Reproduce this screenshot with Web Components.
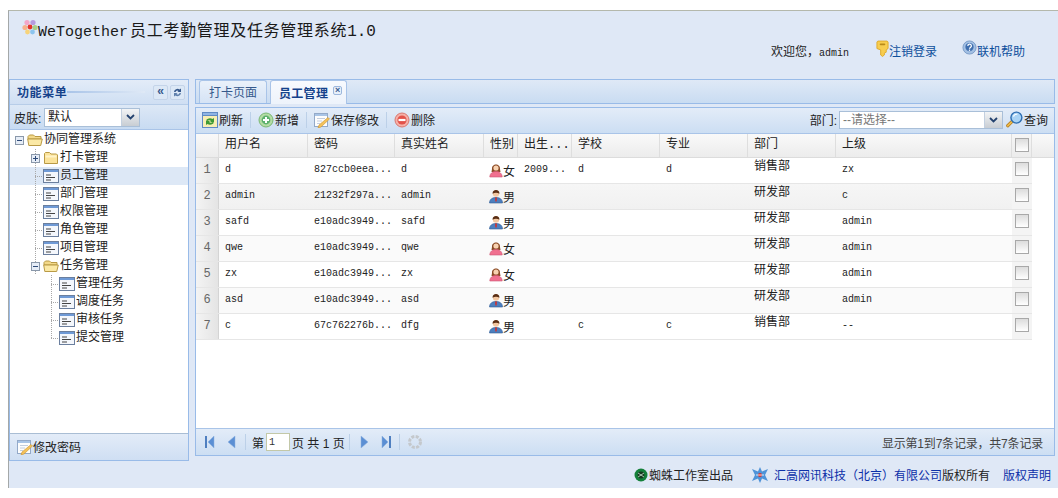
<!DOCTYPE html>
<html lang="zh">
<head>
<meta charset="utf-8">
<title>WeTogether</title>
<style>
  html, body { margin: 0; padding: 0; background: #fff; }
  body { font: 12px "Liberation Mono", "Noto Sans CJK SC", monospace; color: #222; overflow: hidden; }
</style>
</head>
<body>
<wt-app></wt-app>
<script>
// every icon is a small inline svg, wt-icon picks one by name
const ICONS = {
  flower: `<svg viewBox="0 0 16 16"><circle cx="5" cy="3.5" r="2.6" fill="#f3a6c8"/><circle cx="11" cy="3.5" r="2.6" fill="#b59be0"/><circle cx="3" cy="8.5" r="2.6" fill="#f7b08c"/><circle cx="13" cy="8.5" r="2.6" fill="#a8d08c"/><circle cx="5.5" cy="13" r="2.4" fill="#f7d37a"/><circle cx="10.5" cy="13" r="2.4" fill="#8cc4ee"/><circle cx="8" cy="8" r="2.4" fill="#e3342a"/></svg>`,
  key: `<svg viewBox="0 0 14 18"><path d="M2 1h10l1 1v7l-2 1.5V13l-2 1v2l-2 1.5L5 16v-5.5L1 9V2z" fill="#f7cd4f" stroke="#dfa92a"/><rect x="4" y="3.5" width="6" height="2" rx="1" fill="#b98a1a"/></svg>`,
  help: `<svg viewBox="0 0 16 16"><circle cx="8" cy="8" r="7" fill="#a3c0e4" stroke="#7b9cc8"/><circle cx="8" cy="7.5" r="4.4" fill="#3f6eae"/><path d="M6.2 6.3a1.9 1.9 0 1 1 2.8 1.6c-.7.4-1 .7-1 1.4" fill="none" stroke="#fff" stroke-width="1.3"/><rect x="7.3" y="10.2" width="1.4" height="1.4" fill="#fff"/></svg>`,
  folderOpen: `<svg viewBox="0 0 16 16"><path d="M1 4.5 2.5 3h4L8 4.5h6V7H1z" fill="#f3d98a" stroke="#b99a45"/><path d="M.7 7h14.6l-1.6 6.5H1.8z" fill="#fbe9a6" stroke="#b99a45"/></svg>`,
  folder: `<svg viewBox="0 0 16 16"><path d="M1.500 13.500V3.500l1-1h4l1.500 1.500h5.500l1 1v8.500z" fill="#fbe39a" stroke="#b99a45"/><path d="M2.500 5.500h11v2h-11z" fill="#fff3c8"/></svg>`,
  leaf: `<svg viewBox="0 0 16 16"><rect x=".5" y="1.500" width="15" height="13" fill="#f4f7fc" stroke="#6b7f9e"/><rect x="1" y="2" width="14" height="2" fill="#6f9ad6"/><path d="M3 7h5M3 9.500h9M3 12h5" stroke="#444"/></svg>`,
  plus: `<svg viewBox="0 0 9 9"><rect x=".5" y=".5" width="8" height="8" fill="#e6edf7" stroke="#8a98aa"/><path d="M2 4.500h5M4.500 2v5" stroke="#2f4b78"/></svg>`,
  minus: `<svg viewBox="0 0 9 9"><rect x=".5" y=".5" width="8" height="8" fill="#e6edf7" stroke="#8a98aa"/><path d="M2 4.500h5" stroke="#2f4b78"/></svg>`,
  female: `<svg viewBox="0 0 14 16"><path d="M3 7C2.500 1 11.500 1 11 7l.5 3h-9z" fill="#8a4a25"/><path d="M.8 15c0-3.500 2.700-5.500 6.200-5.500s6.200 2 6.200 5.500z" fill="#f0708f" stroke="#cf5575" stroke-width=".6"/><circle cx="7" cy="6" r="2.600" fill="#f8d2b0"/></svg>`,
  male: `<svg viewBox="0 0 14 16"><path d="M.5 15c0-3.500 2.500-5.500 6.500-5.500s6.500 2 6.500 5.500z" fill="#4c7fbe" stroke="#2f5c95" stroke-width=".6"/><path d="M6 9.500h2l-.3 4h-1.400z" fill="#c33"/><circle cx="7" cy="5.500" r="3.200" fill="#f3c8a2"/><path d="M3.600 5.800C3 .8 11 .8 10.400 5.800 8.500 4.300 5.500 4.300 3.600 5.800z" fill="#5a2e14"/></svg>`,
  refresh: `<svg viewBox="0 0 16 16"><rect x=".5" y="2.500" width="15" height="13" fill="#f8eeb4" stroke="#5f8ac4"/><rect x=".5" y=".5" width="15" height="3" fill="#8fb4e4" stroke="#5f8ac4"/><path d="M4 8.500a4 3 0 0 1 6.500-1.500l1.500-1v4H8l1-1a2.500 2 0 0 0-3.500 0z" fill="#3f9a35"/><path d="M12 10.500a4 3 0 0 1-6.500 1.500L4 13V9h4l-1 1a2.500 2 0 0 0 3.500 0z" fill="#3f9a35"/></svg>`,
  add: `<svg viewBox="0 0 16 16"><circle cx="8" cy="8" r="7" fill="#b4dca4" stroke="#7ab874"/><circle cx="8" cy="8" r="4.400" fill="#5cb06c"/><path d="M8 5v6M5 8h6" stroke="#fff" stroke-width="2"/></svg>`,
  edit: `<svg viewBox="0 0 16 16"><rect x=".5" y="1.500" width="13" height="13" fill="#fdfdfd" stroke="#93a9c8"/><rect x="1" y="2" width="12" height="2" fill="#a8c4e6"/><path d="M3 6.500h8M3 9h5M3 11.500h3" stroke="#c4cede"/><path d="M14 5.500l1.500 1.500L7 15l-3 1 1-3z" fill="#f4c25a" stroke="#c99434" stroke-width=".6"/></svg>`,
  del: `<svg viewBox="0 0 16 16"><circle cx="8" cy="8" r="7" fill="#f6b0a8" stroke="#d87870"/><circle cx="8" cy="8" r="4.600" fill="#e2524a"/><path d="M4.500 8h7" stroke="#fff" stroke-width="2.200"/></svg>`,
  search: `<svg viewBox="0 0 18 18"><path d="M7 10.500 1.800 15.600" stroke="#b9822a" stroke-width="3.400" stroke-linecap="round"/><path d="M7 10.500 1.800 15.600" stroke="#f2c14a" stroke-width="1.600" stroke-linecap="round"/><circle cx="11" cy="7" r="5.800" fill="#a9d3f5" stroke="#2f6fb3" stroke-width="1.500"/><path d="M8 6a3.500 3 0 0 1 4-2.500" stroke="#fff" stroke-width="1.200" fill="none"/></svg>`,
  first: `<svg viewBox="0 0 11 14"><path d="M1 1h2v12H1z" fill="#4f7fc0"/><path d="M10 1v12L4 7z" fill="#5b8fd4" stroke="#8fb0dc" stroke-width=".5"/></svg>`,
  prev: `<svg viewBox="0 0 9 14"><path d="M8 1v12L1 7z" fill="#5b8fd4" stroke="#8fb0dc" stroke-width=".5"/></svg>`,
  next: `<svg viewBox="0 0 9 14"><path d="M1 1v12l7-6z" fill="#5b8fd4" stroke="#8fb0dc" stroke-width=".5"/></svg>`,
  last: `<svg viewBox="0 0 11 14"><path d="M8 1h2v12H8z" fill="#4f7fc0"/><path d="M1 1v12l6-6z" fill="#5b8fd4" stroke="#8fb0dc" stroke-width=".5"/></svg>`,
  loading: `<svg viewBox="0 0 16 16"><circle cx="8" cy="8" r="5.500" fill="none" stroke="#c4c8cc" stroke-width="3" stroke-dasharray="3 1.320"/></svg>`,
  spider: `<svg viewBox="0 0 14 14"><circle cx="7" cy="7" r="6.500" fill="#14803a"/><circle cx="7" cy="7" r="3.400" fill="#15391f"/><path d="M4 5l6 4M10 5l-6 4" stroke="#cfe8d4" stroke-width=".8"/></svg>`,
  star: `<svg viewBox="0 0 18 16"><path d="M1 2l6 2.500L9 0l2 4.500L17 2l-3 6 3 6-6-2.500L9 16l-2-4.500L1 14l3-6z" fill="#4f93d8"/><circle cx="9" cy="8" r="2" fill="#d9322c"/><path d="M5 8h8" stroke="#fff" stroke-width=".8"/></svg>`,
  sync: `<svg viewBox="0 0 9 9"><path d="M1 4a3.500 3.500 0 0 1 5.500-2.500L8 .5V4H4.500l1-1A2 2 0 0 0 2.500 4z" fill="#36598c"/><path d="M8 5a3.500 3.500 0 0 1-5.500 2.500L1 8.500V5h3.500l-1 1a2 2 0 0 0 3 -1z" fill="#5f80ac"/></svg>`,
};

class WtIcon extends HTMLElement {
  connectedCallback() {
    const w = this.getAttribute("w") || 16;
    const h = this.getAttribute("h") || 16;
    const shadow = this.attachShadow({ mode: "open" });
    shadow.innerHTML = `<style>
      :host { display: inline-flex; flex: none; width: ${w}px; height: ${h}px; }
      svg { width: 100%; height: 100%; display: block; }
    </style>${ICONS[this.getAttribute("name")]}`;
  }
}

// small combobox, used in the skin row and in the toolbar
class WtCombo extends HTMLElement {
  connectedCallback() {
    const shadow = this.attachShadow({ mode: "open" });
    shadow.innerHTML = `<style>
      :host { display: flex; flex: none; box-sizing: border-box; border: 1px solid #a9bfd8; background: #fff; color: var(--combo-color, #222); font-family: "Liberation Sans", "Noto Sans CJK SC", sans-serif; }
      .txt { flex: 1; padding-left: 3px; overflow: hidden; white-space: nowrap; line-height: 16px; }
      .btn { flex: none; width: 17px; display: flex; align-items: center; justify-content: center; background: linear-gradient(#f2f4f6, #c8cdd3); border-left: 1px solid #c3d0e0; }
      svg { width: 9px; height: 6px; }
    </style><div class="txt"><slot></slot></div>
    <div class="btn"><svg viewBox="0 0 9 6"><path d="M1 1l3.500 3.500L8 1" fill="none" stroke="#24426f" stroke-width="1.800"/></svg></div>`;
  }
}

class WtHeader extends HTMLElement {
  connectedCallback() {
    const shadow = this.attachShadow({ mode: "open" });
    shadow.innerHTML = `<style>
      :host { display: flex; flex-direction: column; flex: none; height: 68px; box-sizing: border-box; padding: 8px 33px 0 13px; }
      .title { display: flex; align-items: flex-start; font-size: 15px; line-height: 22px; color: #1a1a1a; height: 22px; }
      .title span { margin-top: 2px; white-space: nowrap; }
      .title b { font-weight: 400; font-size: 16px; letter-spacing: .7px; margin-left: 2px; }
      .title i { font-style: normal; font-size: 16px; }
      .bar { display: flex; justify-content: flex-end; align-items: flex-start; margin-top: -1px; }
      .hello { margin: 5px 27px 0 0; font-size: 10px; line-height: 16px; }
      .hello i { font-style: normal; font-size: 12px; }
      a { display: flex; align-items: flex-start; color: #0e4f9c; line-height: 18px; }
      a span { margin-top: 4px; }
      a + a { margin-left: 25px; }
    </style>
    <div class="title"><wt-icon name="flower"></wt-icon><span>WeTogether<b>员工考勤管理及任务管理系统</b><i>1.0</i></span></div>
    <div class="bar">
      <div class="hello"><i>欢迎您，</i>admin</div>
      <a><wt-icon name="key" w="13" h="17"></wt-icon><span>注销登录</span></a>
      <a><wt-icon name="help" w="15" h="15"></wt-icon><span>联机帮助</span></a>
    </div>`;
  }
}

class WtTreeRow extends HTMLElement {
  connectedCallback() {
    const cells = (this.getAttribute("cells") || "").split(" ").filter(Boolean);
    const shadow = this.attachShadow({ mode: "open" });
    shadow.innerHTML = `<style>
      :host { display: flex; align-items: center; height: 18px; padding-left: 1px; white-space: nowrap; }
      :host([selected]) { background: #dde8f6; }
      .c { flex: none; width: 16px; height: 18px; display: flex; align-items: center; justify-content: center; }
      .v, .t, .l { background-repeat: no-repeat; }
      .v { background-image: repeating-linear-gradient(#a8a8a8 0 1px, transparent 1px 2px); background-size: 1px 100%; background-position: 8px 0; }
      .t { background-image: repeating-linear-gradient(#a8a8a8 0 1px, transparent 1px 2px), repeating-linear-gradient(to right, #a8a8a8 0 1px, transparent 1px 2px); background-size: 1px 100%, 8px 1px; background-position: 8px 0, 8px 9px; }
      .l { background-image: repeating-linear-gradient(#a8a8a8 0 1px, transparent 1px 2px), repeating-linear-gradient(to right, #a8a8a8 0 1px, transparent 1px 2px); background-size: 1px 10px, 8px 1px; background-position: 8px 0, 8px 9px; }
      .label { margin-left: 1px; line-height: 18px; }
    </style>
    ${cells.map(c => {
      if (c === "plus" || c === "minus") return `<span class="c v"><wt-icon name="${c}" w="9" h="9"></wt-icon></span>`;
      return `<span class="c ${c === "_" ? "" : c}"></span>`;
    }).join("")}
    <wt-icon name="${this.getAttribute("icon")}"></wt-icon>
    <span class="label"><slot></slot></span>`;
    if (this.hasAttribute("root")) shadow.querySelector(".c").classList.remove("v");
  }
}

class WtWest extends HTMLElement {
  connectedCallback() {
    const shadow = this.attachShadow({ mode: "open" });
    shadow.innerHTML = `<style>
      :host { display: flex; flex-direction: column; flex: none; width: 180px; box-sizing: border-box; border: 1px solid #99bbe8; background: #fff; }
      .head { flex: none; height: 25px; box-sizing: border-box; display: flex; align-items: center; padding: 0 3px 0 7px; background: linear-gradient(#e3ecf8, #cfdff3); border-bottom: 1px solid #b7cde8; }
      .head b { color: #15428b; font-size: 12px; letter-spacing: .6px; }
      .rule { flex: 1; height: 2px; margin: 0 6px 0 0; background: linear-gradient(to right, #a9c4e8, #dfe9f6); }
      .tool { flex: none; width: 15px; height: 15px; margin-left: 2px; box-sizing: border-box; border: 1px solid #c4d4e9; border-radius: 2px; background: #dce8f6; color: #36598c; display: flex; align-items: center; justify-content: center; font-size: 12px; font-weight: 700; line-height: 1; }
      .tool svg { width: 9px; height: 9px; }
      .skin { flex: none; height: 25px; box-sizing: border-box; display: flex; align-items: center; padding-left: 4px; background: linear-gradient(#dde8f6, #c8dbf2); border-bottom: 1px solid #a9c4e8; white-space: nowrap; }
      .skin span { width: 30px; flex: none; font-family: "Liberation Sans", "Noto Sans CJK SC", sans-serif; }
      wt-combo { width: 96px; height: 19px; }
      .tree { flex: 1; padding-top: 1px; }
      .foot { flex: none; height: 27px; box-sizing: border-box; display: flex; align-items: center; padding-left: 7px; background: linear-gradient(#e3ecf8, #cfdff3); border-top: 1px solid #a9bdd4; }
    </style>
    <div class="head"><b>功能菜单</b><div class="rule"></div><div class="tool">«</div><div class="tool">${ICONS.sync}</div></div>
    <div class="skin"><span>皮肤:</span><wt-combo>默认</wt-combo></div>
    <div class="tree">
      <wt-tree-row root cells="minus" icon="folderOpen">协同管理系统</wt-tree-row>
      <wt-tree-row cells="_ plus" icon="folder">打卡管理</wt-tree-row>
      <wt-tree-row selected cells="_ t" icon="leaf">员工管理</wt-tree-row>
      <wt-tree-row cells="_ t" icon="leaf">部门管理</wt-tree-row>
      <wt-tree-row cells="_ t" icon="leaf">权限管理</wt-tree-row>
      <wt-tree-row cells="_ t" icon="leaf">角色管理</wt-tree-row>
      <wt-tree-row cells="_ t" icon="leaf">项目管理</wt-tree-row>
      <wt-tree-row cells="_ minus" icon="folderOpen">任务管理</wt-tree-row>
      <wt-tree-row cells="_ _ t" icon="leaf">管理任务</wt-tree-row>
      <wt-tree-row cells="_ _ t" icon="leaf">调度任务</wt-tree-row>
      <wt-tree-row cells="_ _ t" icon="leaf">审核任务</wt-tree-row>
      <wt-tree-row cells="_ _ l" icon="leaf">提交管理</wt-tree-row>
    </div>
    <div class="foot"><wt-icon name="edit"></wt-icon><span>修改密码</span></div>`;
  }
}

class WtTabs extends HTMLElement {
  connectedCallback() {
    const shadow = this.attachShadow({ mode: "open" });
    shadow.innerHTML = `<style>
      :host { display: flex; flex: none; align-items: flex-end; height: 25px; box-sizing: border-box; padding-left: 3px; gap: 3px; border: 1px solid #99bbe8; background: linear-gradient(#dfe9f6, #c9dcf2); }
      .tab { height: 23px; box-sizing: border-box; display: flex; align-items: center; justify-content: center; border: 1px solid #a9c4e8; border-bottom: 0; border-radius: 3px 3px 0 0; background: linear-gradient(#eaf1fa, #d5e3f5); color: #36598c; padding: 0 9px; }
      .on { background: linear-gradient(#f8fafe, #edf3fb); color: #15428b; font-weight: 700; letter-spacing: .3px; margin-bottom: -1px; height: 24px; padding: 0 4px 0 8px; }
      .x { width: 9px; height: 9px; margin: -4px 0 0 5px; box-sizing: border-box; border: 1px solid #9db7dc; border-radius: 2px; background: #e8f0fa; color: #3a5d90; font: 700 9px/6px "Liberation Sans", sans-serif; text-align: center; letter-spacing: 0; }
    </style>
    <div class="tab">打卡页面</div>
    <div class="tab on">员工管理<span class="x">×</span></div>`;
  }
}

class WtToolbar extends HTMLElement {
  connectedCallback() {
    const shadow = this.attachShadow({ mode: "open" });
    shadow.innerHTML = `<style>
      :host { display: flex; flex: none; align-items: center; height: 26px; box-sizing: border-box; padding: 0 6px 2px 6px; background: linear-gradient(#e3ecf8, #ccdef3); white-space: nowrap; border-bottom: 1px solid #a9c4e8; }
      .b { display: flex; align-items: center; gap: 1px; }
      .sep { flex: none; width: 1px; height: 16px; background: #bcd0e8; margin: 0 7px; }
      .grow { flex: 1; }
      .lbl { font-family: "Liberation Sans", "Noto Sans CJK SC", sans-serif; margin-right: 2px; }
      wt-combo { width: 164px; height: 18px; --combo-color: #777; }
    </style>
    <div class="b"><wt-icon name="refresh"></wt-icon>刷新</div><div class="sep"></div>
    <div class="b"><wt-icon name="add"></wt-icon>新增</div><div class="sep"></div>
    <div class="b"><wt-icon name="edit"></wt-icon>保存修改</div><div class="sep"></div>
    <div class="b"><wt-icon name="del"></wt-icon>删除</div>
    <div class="grow"></div>
    <span class="lbl">部门:</span><wt-combo>--请选择--</wt-combo>
    <div class="b" style="margin-left:3px"><wt-icon name="search" w="17" h="17"></wt-icon>查询</div>`;
  }
}

const GRID_COLS = "23px 89px 87px 89px 34px 54px 88px 88px 88px 176px 20px";
const GRID_HEAD = ["", "用户名", "密码", "真实姓名", "性别", "出生...", "学校", "专业", "部门", "上级"];
const GRID_ROWS = [
  ["d", "827ccb0eea...", "d", "f", "2009...", "d", "d", "销售部", "zx"],
  ["admin", "21232f297a...", "admin", "m", "", "", "", "研发部", "c"],
  ["safd", "e10adc3949...", "safd", "m", "", "", "", "研发部", "admin"],
  ["qwe", "e10adc3949...", "qwe", "f", "", "", "", "研发部", "admin"],
  ["zx", "e10adc3949...", "zx", "f", "", "", "", "研发部", "admin"],
  ["asd", "e10adc3949...", "asd", "m", "", "", "", "研发部", "admin"],
  ["c", "67c762276b...", "dfg", "m", "", "c", "c", "销售部", "--"],
];

class WtGrid extends HTMLElement {
  connectedCallback() {
    const shadow = this.attachShadow({ mode: "open" });
    const box = `<span class="box"></span>`;
    const head = GRID_HEAD.map(t => `<div class="h">${t}</div>`).join("") + `<div class="h ck">${box}</div>`;
    const rows = GRID_ROWS.map((r, i) => {
      const cells = r.map((t, j) => {
        if (j === 3) {
          const female = t === "f";
          return `<div class="d sex"><wt-icon name="${female ? "female" : "male"}" w="14" h="16"></wt-icon><span>${female ? "女" : "男"}</span></div>`;
        }
        if (j === 7) return `<div class="d dept">${t}</div>`;
        return `<div class="d">${t}</div>`;
      }).join("");
      return `<div class="row ${i === 1 ? "hot" : i % 2 ? "alt" : ""}"><div class="num">${i + 1}</div>${cells}<div class="d ck">${box}</div></div>`;
    }).join("");
    shadow.innerHTML = `<style>
      :host { display: block; flex: 1; min-height: 0; background: #fff; font-size: 10px; }
      .head { display: grid; grid-template-columns: ${GRID_COLS} 1fr; height: 24px; background: linear-gradient(#f9f9f9, #ececec); border-bottom: 1px solid #dcdcdc; box-sizing: border-box; }
      .h { font-size: 12px; line-height: 23px; padding-left: 6px; border-right: 1px solid #dedede; white-space: nowrap; }
      .row { display: grid; grid-template-columns: ${GRID_COLS}; height: 26px; box-sizing: border-box; border-bottom: 1px solid #e6e6e6; width: 836px; }
      .alt { background: #fafafa; }
      .hot { background: linear-gradient(#f6f6f6, #f1f1f1); }
      .num { background: linear-gradient(to right, #f4f4f4, #e4e4e4); border-right: 1px solid #d4d4d4; font-size: 12px; color: #666; text-align: center; line-height: 25px; }
      .d { padding: 0 0 0 6px; line-height: 24px; white-space: nowrap; color: #222; }
      .sex { display: flex; align-items: flex-start; padding: 4px 0 0 5px; font-size: 12px; line-height: 20px; }
      .sex span { margin-top: 1px; }
      .dept { font-size: 12px; line-height: 19px; }
      .ck { padding: 0 0 3px; display: flex; justify-content: center; align-items: center; background: linear-gradient(#f6f6f6, #ececec); }
      .row .ck { background: #f4f4f4; }
      .head .ck { padding: 0 0 2px; }
      .box { width: 14px; height: 14px; box-sizing: border-box; border: 1px solid #a8a8a8; background: linear-gradient(#dcdcdc, #fff); }
    </style>
    <div class="head">${head}<div></div></div>${rows}`;
  }
}

class WtPager extends HTMLElement {
  connectedCallback() {
    const shadow = this.attachShadow({ mode: "open" });
    shadow.innerHTML = `<style>
      :host { display: flex; flex: none; align-items: center; height: 27px; box-sizing: border-box; padding: 0 11px 0 8px; background: linear-gradient(#e3ecf8, #ccdef3); border-top: 1px solid #a9c4e8; white-space: nowrap; font-family: "Liberation Sans", "Noto Sans CJK SC", sans-serif; }
      .sep { flex: none; width: 1px; height: 16px; background: #bcd0e8; margin: 0 6px 0 4px; }
      input { width: 24px; height: 18px; box-sizing: border-box; margin: 0 2px; padding: 0 0 0 2px; border: 1px solid #c3c8a8; font: 10px "Liberation Mono", monospace; color: #333; background: #fff; }
      .grow { flex: 1; }
      .info { color: #444; letter-spacing: -.2px; }
    </style>
    <wt-icon name="first" w="11" h="14" style="margin-right:12px"></wt-icon><wt-icon name="prev" w="9" h="14" style="margin-right:5px"></wt-icon><div class="sep"></div>
    <span>第</span><input value="1"><span>页 共 1 页</span><div class="sep"></div>
    <wt-icon name="next" w="9" h="14" style="margin:0 12px 0 4px"></wt-icon><wt-icon name="last" w="11" h="14" style="margin-right:3px"></wt-icon><div class="sep"></div>
    <wt-icon name="loading" style="margin-left:1px"></wt-icon>
    <div class="grow"></div>
    <span class="info">显示第1到7条记录，共7条记录</span>`;
  }
}

class WtFooter extends HTMLElement {
  connectedCallback() {
    const shadow = this.attachShadow({ mode: "open" });
    shadow.innerHTML = `<style>
      :host { display: flex; flex: 1; align-items: center; justify-content: flex-end; padding: 0 7px 0 0; white-space: nowrap; }
      a { color: #0b2fa8; }
      .spider { margin-left: 4px; display: flex; align-items: center; gap: 1px; margin-right: 18px; }
      .star { margin-right: 5px; }
      .law { margin-left: 13px; }
    </style>
    <div class="spider"><wt-icon name="spider" w="14" h="14"></wt-icon>蜘蛛工作室出品</div>
    <wt-icon class="star" name="star" w="18" h="16"></wt-icon>
    <span><a>汇高网讯科技（北京）有限公司</a>版权所有</span>
    <a class="law">版权声明</a>`;
  }
}

class WtCenter extends HTMLElement {
  connectedCallback() {
    const shadow = this.attachShadow({ mode: "open" });
    shadow.innerHTML = `<style>
      :host { display: flex; flex-direction: column; flex: none; width: 860px; }
      .panel { flex: 1; margin-top: 3px; min-height: 0; display: flex; flex-direction: column; border: 1px solid #99bbe8; margin-bottom: 5px; }
    </style>
    <wt-tabs></wt-tabs>
    <div class="panel"><wt-toolbar></wt-toolbar><wt-grid></wt-grid><wt-pager></wt-pager></div>`;
  }
}

class WtApp extends HTMLElement {
  connectedCallback() {
    const shadow = this.attachShadow({ mode: "open" });
    shadow.innerHTML = `<style>
      :host { display: flex; flex-direction: column; box-sizing: border-box; margin: 10px 0 0 8px; width: 1050px; height: 478px; background: #dfe8f6; border-top: 1px solid #b4b8ac; border-left: 1px solid #a4a8a8; }
      .main { flex: none; height: 382px; display: flex; gap: 6px; }
    </style>
    <wt-header></wt-header>
    <div class="main"><wt-west></wt-west><wt-center></wt-center></div>
    <wt-footer></wt-footer>`;
  }
}

// children are defined before the parents that use them
customElements.define("wt-icon", WtIcon);
customElements.define("wt-combo", WtCombo);
customElements.define("wt-header", WtHeader);
customElements.define("wt-tree-row", WtTreeRow);
customElements.define("wt-west", WtWest);
customElements.define("wt-tabs", WtTabs);
customElements.define("wt-toolbar", WtToolbar);
customElements.define("wt-grid", WtGrid);
customElements.define("wt-pager", WtPager);
customElements.define("wt-footer", WtFooter);
customElements.define("wt-center", WtCenter);
customElements.define("wt-app", WtApp);
</script>
</body>
</html>
